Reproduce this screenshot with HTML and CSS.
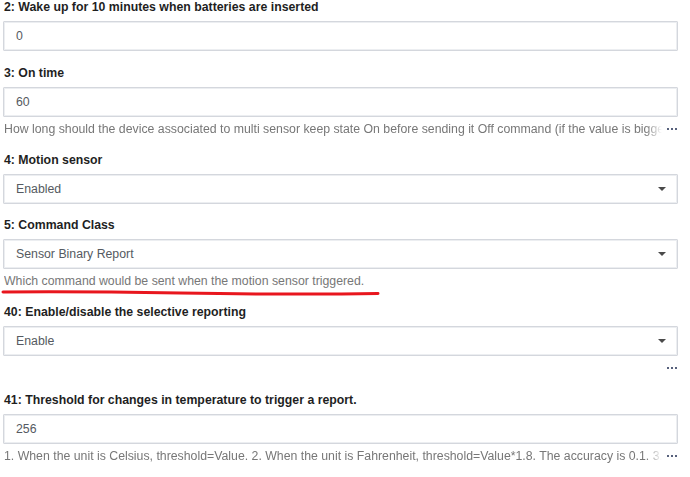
FILE: index.html
```html
<!DOCTYPE html>
<html>
<head>
<meta charset="utf-8">
<link rel="stylesheet" href="styles.css">
</head>
<body>
<div class="form">
  <div class="field">
    <div class="label">2: Wake up for 10 minutes when batteries are inserted</div>
    <div class="input">0</div>
  </div>
  <div class="field">
    <div class="label">3: On time</div>
    <div class="input">60</div>
    <div class="help"><span class="help-text">How long should the device associated to multi sensor keep state On before sending it Off command (if the value is bigger than 10 seconds, the device will send it)</span><span class="dots" aria-label="more"><i></i><i></i><i></i></span></div>
  </div>
  <div class="field">
    <div class="label">4: Motion sensor</div>
    <div class="input select">Enabled<span class="caret"></span></div>
  </div>
  <div class="field tight">
    <div class="label">5: Command Class</div>
    <div class="input select">Sensor Binary Report<span class="caret"></span></div>
    <div class="help"><span class="help-text full">Which command would be sent when the motion sensor triggered.</span></div>
  </div>
  <div class="field">
    <div class="label">40: Enable/disable the selective reporting</div>
    <div class="input select">Enable<span class="caret"></span></div>
    <div class="help"><span class="help-text"></span><span class="dots"><i></i><i></i><i></i></span></div>
  </div>
  <div class="field spaced">
    <div class="label">41: Threshold for changes in temperature to trigger a report.</div>
    <div class="input">256</div>
    <div class="help"><span class="help-text">1. When the unit is Celsius, threshold=Value. 2. When the unit is Fahrenheit, threshold=Value*1.8. The accuracy is 0.1. 3. The value is</span><span class="dots"><i></i><i></i><i></i></span></div>
  </div>
</div>
<svg class="scribble" width="690" height="477" viewBox="0 0 690 477">
  <path d="M3 292 C 60 291.5, 120 292, 180 293 S 320 294.5, 378 293.5" fill="none" stroke="#e8161e" stroke-width="3" stroke-linecap="round"/>
</svg>
</body>
</html>
```
FILE: styles.css
```css
html, body {
  margin: 0;
  padding: 0;
  background: #ffffff;
}
body {
  font-family: "Liberation Sans", Arial, sans-serif;
  font-size: 12.3px;
  position: relative;
  width: 690px;
  height: 477px;
  overflow: hidden;
}
.form {
  display: flex;
  flex-direction: column;
  gap: 14px;
  padding: 0 12px 0 3px;
  margin-top: -1px;
}
.label {
  font-weight: bold;
  color: #1f1f1f;
  line-height: 16px;
  margin: 0 0 6px 1px;
}
.input {
  box-sizing: border-box;
  height: 30px;
  border: 1px solid #d4d7dd;
  box-shadow: inset 0 0 0 1px #eceef1;
  border-radius: 1px;
  padding: 0 12px;
  display: flex;
  align-items: center;
  color: #555a61;
  position: relative;
}
.select .caret {
  position: absolute;
  right: 11px;
  top: 12px;
  width: 0;
  height: 0;
  border-left: 4px solid transparent;
  border-right: 4px solid transparent;
  border-top: 4px solid #4a4a4a;
}
.help {
  display: flex;
  align-items: center;
  margin-top: 3px;
  line-height: 18px;
  height: 18px;
  color: #777777;
  padding-left: 1px;
}
.help-text {
  flex: 1;
  min-width: 0;
  white-space: nowrap;
  overflow: hidden;
  -webkit-mask-image: linear-gradient(to right, #000 calc(100% - 16px), transparent);
  mask-image: linear-gradient(to right, #000 calc(100% - 16px), transparent);
}
.help-text.full {
  -webkit-mask-image: none;
  mask-image: none;
}
.dots {
  flex: none;
  display: flex;
  gap: 1.5px;
  margin-left: 5px;
  margin-right: 1px;
}
.dots i {
  display: block;
  width: 2.5px;
  height: 2.5px;
  border-radius: 50%;
  background: #1f2d50;
}
.tight {
  margin-top: -1px;
}
.spaced {
  margin-top: 1px;
}
.scribble {
  position: absolute;
  left: 0;
  top: 0;
  pointer-events: none;
}
```
